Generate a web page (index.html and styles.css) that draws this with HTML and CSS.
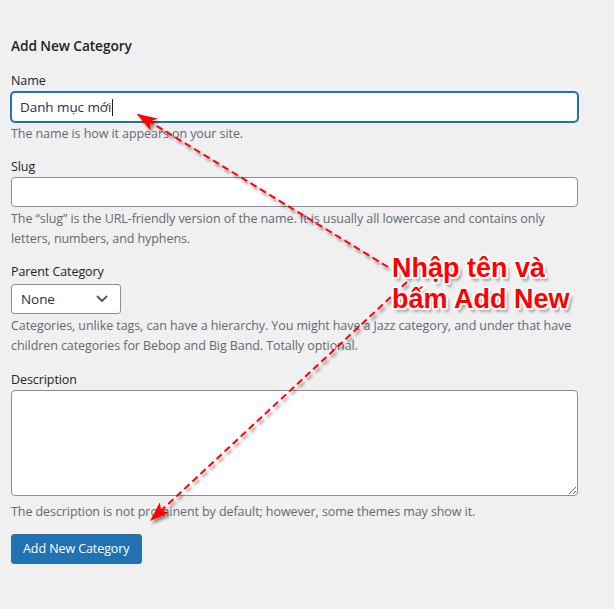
FILE: index.html
```html
<!DOCTYPE html>
<html lang="en">
<head>
<meta charset="utf-8">
<title>Add New Category</title>
<link rel="stylesheet" href="styles.css">
</head>
<body>
<div class="page">
  <form class="term-form">
    <h2 class="form-title">Add New Category</h2>

    <div class="form-field">
      <label class="field-label">Name</label>
      <div class="text-input is-focused"><span class="value">Danh mục mới</span><span class="caret"></span></div>
      <p class="help">The name is how it appears on your site.</p>
    </div>

    <div class="form-field field-slug">
      <label class="field-label">Slug</label>
      <div class="text-input"></div>
      <p class="help">The “slug” is the URL-friendly version of the name. It is usually all lowercase and contains only letters, numbers, and hyphens.</p>
    </div>

    <div class="form-field field-parent">
      <label class="field-label">Parent Category</label>
      <div class="select-box">
        <span class="select-value">None</span>
        <svg class="chevron" width="12" height="8" viewBox="0 0 12 8"><path d="M1.5 1.5 L6 6 L10.5 1.5" fill="none" stroke="#50575e" stroke-width="1.8" stroke-linecap="round" stroke-linejoin="round"/></svg>
      </div>
      <p class="help">Categories, unlike tags, can have a hierarchy. You might have a Jazz category, and under that have children categories for Bebop and Big Band. Totally optional.</p>
    </div>

    <div class="form-field field-desc">
      <label class="field-label">Description</label>
      <textarea class="textarea"></textarea>
      <p class="help help-desc">The description is not prominent by default; however, some themes may show it.</p>
    </div>

    <div class="submit-row">
      <button type="button" class="button-primary">Add New Category</button>
    </div>
  </form>

  <svg class="arrows" width="614" height="609" viewBox="0 0 614 609">
    <defs>
      <filter id="shadow" x="-20%" y="-20%" width="140%" height="140%">
        <feDropShadow dx="2" dy="3" stdDeviation="1.6" flood-color="#000" flood-opacity="0.45"/>
      </filter>
      <marker id="head" markerUnits="userSpaceOnUse" markerWidth="22" markerHeight="14" refX="20" refY="7" orient="auto">
        <path d="M0 0 L20 7 L0 14 L5 7 Z" fill="#ff0000"/>
      </marker>
    </defs>
    <g filter="url(#shadow)">
      <line x1="388" y1="267" x2="137" y2="114" stroke="#ff0000" stroke-width="2" stroke-dasharray="7 4" marker-end="url(#head)"/>
      <line x1="407" y1="282" x2="150" y2="521" stroke="#ff0000" stroke-width="2" stroke-dasharray="7 4" marker-end="url(#head)"/>
    </g>
  </svg>

  <div class="callout">Nhập tên và<br>bấm Add New</div>
</div>
</body>
</html>
```

FILE: styles.css
```css
* { box-sizing: border-box; }

html, body {
  margin: 0;
  padding: 0;
  background: #f0f0f1;
}

body {
  font-family: "Open Sans", "Noto Sans", sans-serif;
  font-size: 12.5px;
  letter-spacing: -0.08px;
  line-height: 20px;
  color: #3c434a;
}

.page {
  position: relative;
  width: 614px;
  height: 609px;
  overflow: hidden;
}

.term-form {
  display: flex;
  flex-direction: column;
  padding: 36px 36px 0 11px;
  width: 614px;
}

.form-title {
  margin: 0;
  font-size: 13.7px;
  line-height: 20px;
  font-weight: 600;
  color: #1d2327;
}

.form-field {
  display: flex;
  flex-direction: column;
  margin-top: 15px;
}

.field-slug { margin-top: 13px; }
.field-parent { margin-top: 13px; }
.field-desc { margin-top: 14px; }

.field-label {
  display: block;
  color: #1d2327;
  line-height: 20px;
}

.text-input {
  display: flex;
  align-items: center;
  height: 30px;
  width: 567px;
  padding: 0 8px;
  background: #fff;
  border: 1px solid #8c8f94;
  border-radius: 4px;
  font-size: 13.5px;
  color: #2c3338;
}

.text-input.is-focused {
  margin-top: 1px;
  border-color: #2271b1;
  box-shadow: 0 0 0 1px #2271b1;
}

.caret {
  display: inline-block;
  width: 1px;
  height: 17px;
  margin-left: 1px;
  background: #1d2327;
}

.help {
  margin: 2px 0 0;
  color: #646970;
  line-height: 20px;
}

.select-box {
  display: flex;
  align-items: center;
  justify-content: space-between;
  margin-top: 2px;
  width: 110px;
  height: 30px;
  padding: 0 12px 0 9px;
  background: #fff;
  border: 1px solid #8c8f94;
  border-radius: 3px;
  font-size: 13.5px;
  color: #2c3338;
}

.textarea {
  display: block;
  width: 567px;
  height: 106px;
  margin: 0;
  background: #fff;
  border: 1px solid #8c8f94;
  border-radius: 4px;
  resize: both;
  font-family: inherit;
}

.help-desc { margin-top: 6px; }

.submit-row {
  margin-top: 12px;
}

.button-primary {
  height: 30px;
  padding: 0 11px;
  background: #2271b1;
  color: #fff;
  border: 1px solid #2271b1;
  border-radius: 3px;
  font-family: inherit;
  font-size: 12.5px;
  letter-spacing: -0.08px;
  line-height: 28px;
}

.arrows {
  position: absolute;
  top: 0;
  left: 0;
  pointer-events: none;
}

.callout {
  position: absolute;
  top: 253px;
  left: 392px;
  font-family: "Liberation Sans", Arial, sans-serif;
  font-weight: 700;
  font-size: 27px;
  letter-spacing: 0;
  line-height: 31px;
  color: #ff0000;
  white-space: nowrap;
  text-shadow:
    2px 0 0 #fff, -2px 0 0 #fff, 0 2px 0 #fff, 0 -2px 0 #fff,
    1.5px 1.5px 0 #fff, -1.5px 1.5px 0 #fff, 1.5px -1.5px 0 #fff, -1.5px -1.5px 0 #fff,
    3px 4px 3px rgba(0,0,0,0.35);
}
```
